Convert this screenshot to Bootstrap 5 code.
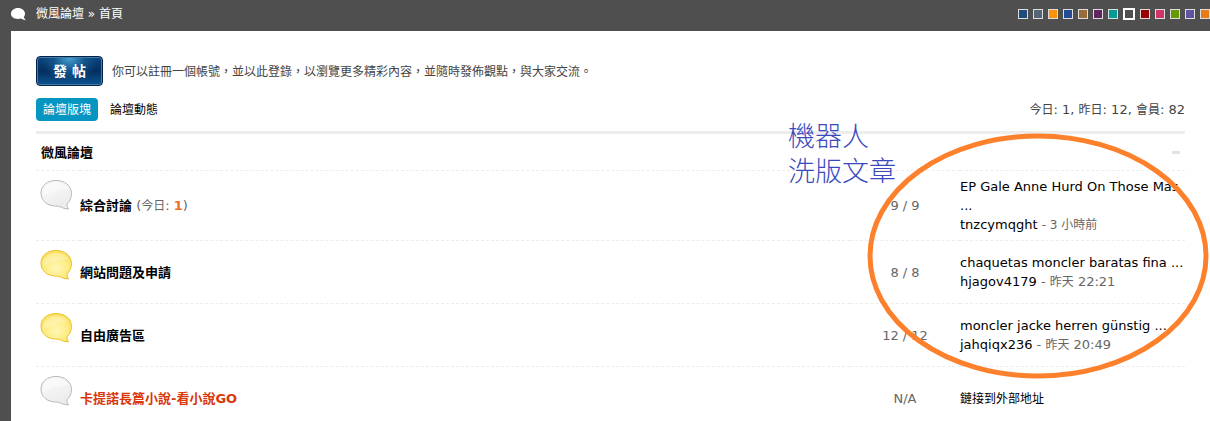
<!DOCTYPE html>
<html lang="zh-Hant">
<head>
<meta charset="utf-8">
<meta name="viewport" content="width=device-width, initial-scale=1">
<title>微風論壇</title>
<link href="https://cdn.jsdelivr.net/npm/bootstrap@5.3.0/dist/css/bootstrap.min.css" rel="stylesheet">
<style>
body{background:#4f4f4f;color:#444;font:12px/19px "DejaVu Sans","Noto Sans CJK TC",sans-serif;min-height:100vh;overflow-x:hidden}
a{text-decoration:none;color:#000}
.topbar{height:31px;padding-left:11px}
.topbar a,.topbar span{color:#fff}
.crumbs{gap:10px;padding-bottom:3px}
.swatches{gap:5px;padding-bottom:3px}
.swatch{width:10px;height:10px;border:1px solid #ddd;padding:0}
.swatch.current{width:12px;height:12px;border:2px solid #fff}
.navy{background:#1f4b7e}
.slate{background:#546673}
.amber{background:#ff9209}
.royal{background:#254c94}
.tan{background:#996b38}
.plum{background:#652362}
.teal{background:#029b96}
.gray{background:#4f4f4f}
.ruby{background:#9b0000}
.rose{background:#d03468}
.leaf{background:#659b00}
.iris{background:#6253a2}
.rust{background:#e87b12}
.page{background:#fff;margin-left:11px;padding:25px 25px 0;flex:1}
.newpost{width:67px;height:30px;border:1px solid #03234a;border-radius:4px;padding:0;color:#fff;font-size:14px;font-weight:700;line-height:28px;background:radial-gradient(ellipse at 50% 0,#4aa5d6 0,#12548a 35%,transparent 62%),linear-gradient(#0b477e,#052f60 50%,#0b5591);box-shadow:inset 0 0 0 1px #437da5}
.toprow{gap:9px}
.toprow span{padding-top:2px}
.tabrow{margin-top:12px;height:23px}
.tabrow .nav-link{color:#000;padding:3px 7px 1px;border-radius:4px}
.tabrow .nav-link.active{background:#0795c2;color:#fff}
.tabrow .nav{gap:5px}
.stats{font-size:13px}
.board{margin-top:10px;border-top:3px solid #ededed}
.board h2{font-size:13px;line-height:19px;font-weight:700;color:#000;margin:0}
.boardhead{height:36px;padding:0 5px}
.toggle{width:8px;height:3px;border:0;padding:0;background:#e2e2e2}
.forums{width:100%;table-layout:fixed;border-collapse:collapse;font-size:13px}
.forums tr{border-top:1px dashed #ededed;height:63px}
.forums tr.tall{height:70px}
.forums td{padding:0;vertical-align:middle}
.forums .iconcell{width:44px;padding:9px 0 0 4px;vertical-align:top}
.iconcell svg{display:block}
.countcell{width:110px;text-align:center;color:#666}
.lastcell{width:225px;color:#666}
.han{font-size:12px;line-height:1}
.forum{font-weight:700}
.ext{color:#d9380a}
.today{color:#666}
.today b{color:#f26c1c}
.ring{top:-1px;right:-24px;width:342px;height:248px;pointer-events:none}
.note{top:-17px;right:285px;width:112px;color:#3b48bd;font:300 27px/35px "Noto Sans CJK TC",sans-serif;pointer-events:none}
</style>
</head>
<body class="d-flex flex-column">
<svg width="0" height="0" class="position-absolute" aria-hidden="true">
<defs>
<radialGradient id="gy" cx=".5" cy=".6" r=".7"><stop offset="0" stop-color="#fff6b4"/><stop offset=".55" stop-color="#fdec84"/><stop offset="1" stop-color="#f9d848"/></radialGradient>
<linearGradient id="gg" x2=".4" y2="1"><stop offset="0" stop-color="#fbfbfb"/><stop offset="1" stop-color="#ececec"/></linearGradient>
<path id="bub" d="M16 .500C7.500 .500 1 5.500 1 13S7 26 15.500 26C18.500 26 20.800 27 23.500 28.200L28.500 29C27.300 27 26.800 25.500 27.200 23.500C30 21 31.500 17.500 31.500 13.500C31.500 5.500 24.500 .500 16 .500Z"/>
<path id="shine" d="M3 16C2 8 8 3 16 3C23 3 27 6 28 9C21 9 11 12 3 16Z"/>
</defs>
</svg>
<header class="topbar d-flex justify-content-between align-items-center">
<nav class="crumbs d-flex align-items-center" aria-label="導覽">
<svg width="15" height="13" viewBox="0 0 15 13"><path fill="#fff" d="M7 0C3 0 0 2.500 0 5.800S3 11 7 11C8 11 9 10.800 9.800 10.500L14.500 12.500L12.800 9C13.500 8 14 7 14 5.800C14 2.500 11 0 7 0Z"/></svg>
<div><a href="#">微風論壇</a> <span>»</span> <a href="#">首頁</a></div>
</nav>
<div class="swatches d-flex align-items-center flex-shrink-0">
<button class="swatch navy" aria-label="配色 1"></button>
<button class="swatch slate" aria-label="配色 2"></button>
<button class="swatch amber" aria-label="配色 3"></button>
<button class="swatch royal" aria-label="配色 4"></button>
<button class="swatch tan" aria-label="配色 5"></button>
<button class="swatch plum" aria-label="配色 6"></button>
<button class="swatch teal" aria-label="配色 7"></button>
<button class="swatch gray current" aria-label="配色 8"></button>
<button class="swatch ruby" aria-label="配色 9"></button>
<button class="swatch rose" aria-label="配色 10"></button>
<button class="swatch leaf" aria-label="配色 11"></button>
<button class="swatch iris" aria-label="配色 12"></button>
<button class="swatch rust" aria-label="配色 13"></button>
</div>
</header>
<main class="page">
<div class="toprow d-flex align-items-center">
<button class="newpost">發 帖</button>
<span>你可以註冊一個帳號，並以此登錄，以瀏覽更多精彩內容，並隨時發佈觀點，與大家交流。</span>
</div>
<div class="tabrow d-flex justify-content-between align-items-center">
<nav class="nav"><a class="nav-link active" href="#">論壇版塊</a><a class="nav-link" href="#">論壇動態</a></nav>
<div class="stats"><span class="han">今日</span>: 1, <span class="han">昨日</span>: 12, <span class="han">會員</span>: 82</div>
</div>
<section class="board position-relative">
<div class="boardhead d-flex justify-content-between align-items-center"><h2>微風論壇</h2><button class="toggle" aria-label="收合"></button></div>
<table class="forums">
<tr class="tall"><td class="iconcell"><svg width="32" height="31"><use href="#bub" fill="url(#gg)" stroke="#b9b9b9"/><use href="#shine" fill="#fff" opacity=".4"/></svg></td>
<td><a class="forum" href="#">綜合討論</a> <span class="today">(<span class="han">今日</span>: <b>1</b>)</span></td><td class="countcell">9 / 9</td>
<td class="lastcell"><a href="#">EP Gale Anne Hurd On Those Mas ...</a><br><a href="#">tnzcymqght</a> <span class="han">- 3 小時前</span></td></tr>
<tr><td class="iconcell"><svg width="32" height="31"><use href="#bub" fill="url(#gy)" stroke="#ebc02e"/><use href="#shine" fill="#fff" opacity=".25"/></svg></td>
<td><a class="forum" href="#">網站問題及申請</a></td><td class="countcell">8 / 8</td>
<td class="lastcell"><a href="#">chaquetas moncler baratas fina ...</a><br><a href="#">hjagov4179</a> - <span class="han">昨天</span> 22:21</td></tr>
<tr><td class="iconcell"><svg width="32" height="31"><use href="#bub" fill="url(#gy)" stroke="#ebc02e"/><use href="#shine" fill="#fff" opacity=".25"/></svg></td>
<td><a class="forum" href="#">自由廣告區</a></td><td class="countcell">12 / 12</td>
<td class="lastcell"><a href="#">moncler jacke herren günstig ...</a><br><a href="#">jahqiqx236</a> - <span class="han">昨天</span> 20:49</td></tr>
<tr><td class="iconcell"><svg width="32" height="31"><use href="#bub" fill="url(#gg)" stroke="#b9b9b9"/><use href="#shine" fill="#fff" opacity=".4"/></svg></td>
<td><a class="forum ext" href="#">卡提諾長篇小說-看小說GO</a></td><td class="countcell">N/A</td>
<td class="lastcell"><a class="han" href="#">鏈接到外部地址</a></td></tr>
</table>
<svg class="ring position-absolute" viewBox="0 0 342 248" aria-hidden="true"><ellipse cx="171" cy="123" rx="168" ry="120" fill="none" stroke="#fd812c" stroke-width="5"/></svg>
<div class="note position-absolute">機器人<br>洗版文章</div>
</section>
</main>
<script src="https://cdn.jsdelivr.net/npm/bootstrap@5.3.0/dist/js/bootstrap.bundle.min.js"></script>
</body>
</html>
